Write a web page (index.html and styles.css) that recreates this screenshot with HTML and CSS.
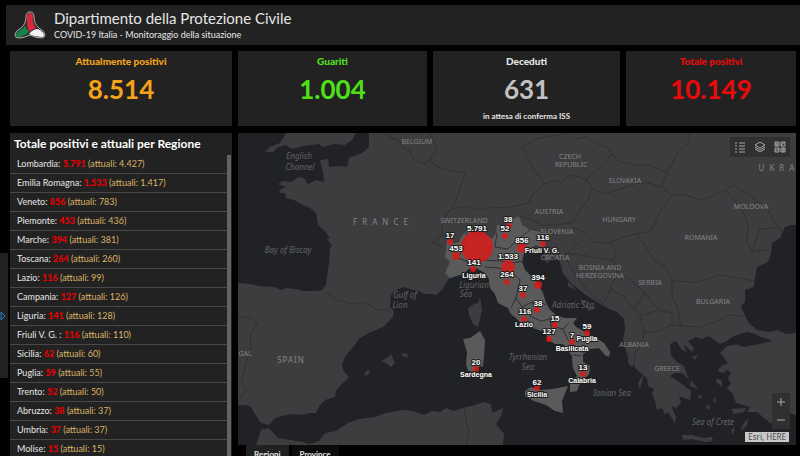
FILE: index.html
```html
<!DOCTYPE html>
<html lang="it">
<head>
    <meta charset="UTF-8">
    <title>Dipartimento della Protezione Civile</title>
    <link rel="stylesheet" href="styles.css">
</head>
<body>
    <header class="header">
        <svg class="logo" viewBox="0 0 32 30">
            <path d="M16 2 Q20 2 20 7 Q20 14 25 18 Q31 21 31 25 Q31 28 27 28 Q22 28 16 25 Q10 28 5 28 Q1 28 1 25 Q1 21 7 18 Q12 14 12 7 Q12 2 16 2Z" class="logo-edge"/>
            <path d="M16 3 Q19 3 19 7 Q18 13 22 18 Q18 19 16 22 Q12 18 13 8 Q13 3 16 3Z" class="logo-red"/>
            <path d="M11 15 Q12 19 15 22 Q11 26 5 27 Q2 27 2 25 Q3 21 8 19 Q10 18 11 15Z" class="logo-green"/>
            <path d="M15 24 Q19 19 24 19 Q30 22 30 25 Q30 27 27 27 Q21 27 15 24Z" class="logo-white"/>
        </svg>
        <div>
            <h1>Dipartimento della Protezione Civile</h1>
            <p>COVID-19 Italia - Monitoraggio della situazione</p>
        </div>
    </header>

    <main class="dashboard">
        <section class="card orange">
            <h2>Attualmente positivi</h2>
            <p class="value">8.514</p>
        </section>
        <section class="card green">
            <h2>Guariti</h2>
            <p class="value">1.004</p>
        </section>
        <section class="card grey">
            <h2>Deceduti</h2>
            <p class="value">631</p>
            <p class="note">in attesa di conferma ISS</p>
        </section>
        <section class="card red">
            <h2>Totale positivi</h2>
            <p class="value">10.149</p>
        </section>

        <section class="regions">
            <h2>Totale positivi e attuali per Regione</h2>
            <ul>
                <li>Lombardia: <b>5.791</b> <span>(attuali: 4.427)</span></li>
                <li>Emilia Romagna: <b>1.533</b> <span>(attuali: 1.417)</span></li>
                <li>Veneto: <b>856</b> <span>(attuali: 783)</span></li>
                <li>Piemonte: <b>453</b> <span>(attuali: 436)</span></li>
                <li>Marche: <b>394</b> <span>(attuali: 381)</span></li>
                <li>Toscana: <b>264</b> <span>(attuali: 260)</span></li>
                <li>Lazio: <b>116</b> <span>(attuali: 99)</span></li>
                <li>Campania: <b>127</b> <span>(attuali: 126)</span></li>
                <li>Liguria: <b>141</b> <span>(attuali: 128)</span></li>
                <li>Friuli V. G. : <b>116</b> <span>(attuali: 110)</span></li>
                <li>Sicilia: <b>62</b> <span>(attuali: 60)</span></li>
                <li>Puglia: <b>59</b> <span>(attuali: 55)</span></li>
                <li>Trento: <b>52</b> <span>(attuali: 50)</span></li>
                <li>Abruzzo: <b>38</b> <span>(attuali: 37)</span></li>
                <li>Umbria: <b>37</b> <span>(attuali: 37)</span></li>
                <li>Molise: <b>15</b> <span>(attuali: 15)</span></li>
            </ul>
        </section>

        <section class="map-column">
            <div class="map">
                <svg class="map-canvas" viewBox="238 133 558 312" preserveAspectRatio="xMidYMid slice">
                    <!-- Land -->
                    <g class="land">
                        <path d="M369 133 V147 L362 153 349 158 347 167 338 166 329 167 328 159 320 160 323 172 324 182 316 180 308 184 304 178 299 177 291 182 283 181 278 184 286 187 280 190 279 193 285 193 286 198 294 200 303 205 310 208 316 213 317 218 318 225 324 230 330 238 327 239 332 246 330 248 329 263 326 285 322 290 316 291 303 291 296 289 286 288 281 290 274 287 259 286 250 284 238 283 V405 L246 405 251 407 255 414 261 423 269 425 274 419 281 416 292 414 303 415 310 413 316 413 320 405 325 400 335 397 336 391 340 386 349 377 343 370 342 365 345 357 353 347 360 338 369 333 383 327 393 317 394 311 390 307 391 295 394 291 403 287 413 290 420 291 424 294 431 294 436 295 443 289 445 284 450 278 463 274 470 268 476 268 485 273 489 279 490 288 495 294 498 303 508 308 511 314 517 319 522 324 530 327 545 332 549 340 555 344 563 344 568 350 572 356 573 368 577 376 570 384 570 392 577 391 580 383 589 374 590 366 583 362 583 354 590 349 599 348 605 355 609 357 610 352 604 343 596 338 587 333 576 327 573 323 577 318 564 318 556 315 550 310 546 303 543 293 538 284 531 276 525 270 522 262 524 253 530 249 536 248 539 252 545 249 543 258 547 263 554 256 560 262 563 274 572 284 583 293 595 301 607 308 617 312 624 319 625 329 623 340 627 354 630 362 638 371 647 378 648 386 654 389 652 394 655 401 657 410 662 408 665 415 668 412 675 423 676 417 671 406 676 408 681 403 679 396 690 400 691 391 682 384 670 376 675 373 682 373 689 380 684 366 677 362 671 355 670 344 676 341 682 350 687 352 683 344 692 352 694 348 688 341 696 337 702 339 709 336 720 344 727 341 732 337 740 334 747 332 755 334 760 337 771 340 756 344 744 347 738 344 727 346 720 353 728 363 720 367 731 372 728 378 731 384 727 388 733 394 736 403 750 407 747 412 757 412 770 423 783 422 787 412 796 415 V333 L786 334 777 330 770 332 757 330 748 322 743 311 741 306 745 302 745 290 754 287 755 278 757 267 768 262 771 254 772 243 780 238 785 227 791 225 796 225 V133 Z"/>
                        <path d="M286 133 280 143 270 147 265 152 273 152 278 147 286 145 292 149 303 146 319 144 323 147 334 144 345 145 352 140 356 133Z"/>
                        <path d="M256 445 261 430 269 428 278 438 291 440 303 442 309 444 319 441 325 433 336 431 348 423 359 419 375 417 386 413 403 410 413 411 424 415 432 411 440 412 446 408 454 411 463 408 475 405 484 402 491 404 492 413 503 408 502 414 496 424 504 434 503 445Z"/>
                        <path d="M480 297 482 310 478 327 473 324 469 315 468 308 474 304 478 303Z"/>
                        <path d="M381 361 388 357 391 354 395 363 391 367 386 363Z M400 354 407 353 408 358 403 356Z M364 373 369 370 370 373 366 376Z"/>
                        <path d="M682 435 691 435 704 438 712 437 713 441 706 442 692 439 683 440Z M742 426 748 418 747 425 741 431Z M731 409 746 408 744 412 734 414Z M691 380 698 389 690 386Z M718 369 726 365 725 373 719 372Z M717 378 722 381 722 387 716 382Z M692 357 698 355 695 360Z M638 383 644 374 640 389Z M698 394 703 397 699 399Z M705 407 709 405 710 410Z M713 400 716 397 715 404Z M731 430 735 427 733 435Z"/>
                        <path d="M628 357 633 364 632 367 628 363Z M574 275 580 287 575 284Z M568 281 577 291 568 286Z M580 299 590 302 582 304Z M585 306 597 308 589 311Z"/>
                    </g>
                    <path class="marmara" d="M729 345 740 338 752 334 759 338 773 341 754 345 742 346 735 344Z"/>

                    <!-- Italy -->
                    <g class="italy">
                        <path d="M447 240 454 243 459 242 462 236 466 232 468 228 472 235 478 238 484 233 492 239 496 233 497 225 505 225 511 220 519 216 522 225 530 230 541 232 540 238 545 249 536 245 530 249 524 253 522 262 525 270 531 276 538 284 543 293 546 303 550 310 556 315 564 318 577 318 573 323 576 327 587 333 596 338 604 343 610 352 609 357 605 355 599 348 590 349 583 354 583 362 590 366 589 374 580 383 577 391 570 392 570 384 577 376 573 368 572 356 568 350 563 344 555 344 549 340 545 332 530 327 522 324 517 319 511 314 508 308 498 303 495 294 490 288 489 279 485 273 476 268 470 268 463 274 450 278 445 273 450 262 445 257 446 249Z"/>
                        <path d="M480 331 485 340 484 356 483 366 477 367 474 372 468 371 466 364 467 352 463 339 470 338Z"/>
                        <path d="M525 391 531 387 540 390 553 389 568 386 562 401 563 413 555 411 546 405 534 401 525 396Z"/>
                    </g>

                    <!-- Borders -->
                    <g class="borders">
                        <path d="M385 133 393 139 398 139 402 147 410 151 414 160 420 162 425 164 428 160 433 164 441 168 451 171 465 173 460 189 454 205 450 210 441 222 443 235"/>
                        <path d="M430 133 437 150 431 158 433 164"/>
                        <path d="M451 209 467 206 479 210 494 207 506 208 517 206 530 203 531 196 545 184 534 170 527 156 522 147 538 138 551 136 570 133"/>
                        <path d="M545 184 555 180 561 183 568 175 579 177 586 179 597 170 607 160 612 154 608 148 595 143 585 137 576 139"/>
                        <path d="M586 179 592 188 588 200 580 210 574 222 558 225 541 225 533 220 519 216"/>
                        <path d="M592 188 604 194 618 190 637 183 648 183 661 187 667 172 649 165 636 165 620 162 612 154"/>
                        <path d="M667 172 680 150 690 141 689 133 M661 187 672 195 685 195 702 200 726 190 733 185 745 192 757 201 768 209 773 220 783 234"/>
                        <path d="M672 195 662 209 651 231 636 234 622 237 609 243 593 242 582 231 573 227"/>
                        <path d="M726 190 742 209 748 224 747 241 752 251 769 250 M752 251 760 229 776 228"/>
                        <path d="M636 234 645 246 654 260 666 267 672 281 697 282 721 275 754 281 M672 281 672 295 678 310 681 326 700 327 716 322 729 315 744 316"/>
                        <path d="M609 243 616 252 614 260 618 273 610 289 605 302 M582 239 568 253 562 257 M564 254 576 254 592 257 614 260 M564 256 575 274 590 293 606 306"/>
                        <path d="M610 289 623 296 634 309 640 316 658 310 672 313 672 325 659 331 644 333 640 317 M644 333 642 346 635 352 634 367 M672 325 682 326 M618 273 632 281 645 293 634 309 M645 293 658 310"/>
                        <path d="M323 290 337 300 353 304 364 302 376 309 390 311"/>
                        <path d="M238 317 250 317 257 324 250 333 251 348 245 367 241 383 247 389 240 398"/>
                        <path d="M464 408 466 421 469 433 466 445"/>
                        <path d="M443 235 432 242 443 247"/>
                        <path d="M467 232 464 246 458 258 469 262 482 260 500 261 513 263 523 261 M497 233 495 247 508 249 518 239 530 230"/>
                        <path d="M485 267 499 268 514 274 520 280 516 298 522 307 530 303 539 301 546 305 M516 298 511 308 M522 307 530 316 541 321 550 319 552 333 M553 315 552 326 563 329 569 323 M563 329 568 340 583 353 M573 355 582 356"/>
                    </g>

                    <!-- Countries and seas -->
                    <g class="country">
                        <text x="417" y="144">BELGIUM</text>
                        <text x="570" y="159">CZECH</text>
                        <text x="571" y="167">REPUBLIC</text>
                        <text x="625" y="183">SLOVAKIA</text>
                        <text x="549" y="214">AUSTRIA</text>
                        <text x="619" y="222">HUNGARY</text>
                        <text x="751" y="209">MOLDOVA</text>
                        <text x="464" y="223">SWITZERLAND</text>
                        <text x="557" y="234">SLOVENIA</text>
                        <text x="701" y="240">ROMANIA</text>
                        <text x="555" y="260">CROATIA</text>
                        <text x="600" y="270">BOSNIA AND</text>
                        <text x="600" y="278">HERZEGOVINA</text>
                        <text x="650" y="285">SERBIA</text>
                        <text x="713" y="304">BULGARIA</text>
                        <text x="634" y="347">ALBANIA</text>
                        <text x="667" y="371">GREECE</text>
                        <text x="245" y="356">GAL</text>
                        <text x="291" y="363" class="wide">SPAIN</text>
                        <text x="383" y="225" class="widest">FRANCE</text>
                        <text x="779" y="171" class="widest">UKRA</text>
                    </g>
                    <g class="sea">
                        <text x="299" y="159">English</text>
                        <text x="300" y="170">Channel</text>
                        <text x="288" y="253">Bay of Biscay</text>
                        <text x="405" y="298">Gulf of</text>
                        <text x="400" y="308">Lion</text>
                        <text x="474" y="288">Ligurian</text>
                        <text x="466" y="297">Sea</text>
                        <text x="573" y="308">Adriatic Sea</text>
                        <text x="528" y="360">Tyrrhenian</text>
                        <text x="528" y="370">Sea</text>
                        <text x="612" y="396">Ionian Sea</text>
                        <text x="713" y="425">Sea of Crete</text>
                    </g>

                    <!-- Cases -->
                    <g class="cases">
                        <circle cx="477" cy="247" r="16"/>
                        <circle cx="450" cy="242" r="3"/>
                        <circle cx="456" cy="256" r="4"/>
                        <circle cx="473" cy="269" r="3"/>
                        <circle cx="509" cy="226" r="3"/>
                        <circle cx="505" cy="236" r="3"/>
                        <circle cx="522" cy="248" r="5"/>
                        <circle cx="543" cy="244" r="3"/>
                        <circle cx="508" cy="267" r="7"/>
                        <circle cx="507" cy="282" r="3"/>
                        <circle cx="538" cy="285" r="4"/>
                        <circle cx="523" cy="295" r="3"/>
                        <circle cx="537" cy="310" r="3"/>
                        <circle cx="524" cy="319" r="3"/>
                        <circle cx="549" cy="339" r="3"/>
                        <circle cx="555" cy="325" r="3"/>
                        <circle cx="587" cy="333" r="3"/>
                        <circle cx="572" cy="342" r="3"/>
                        <circle cx="583" cy="374" r="3"/>
                        <circle cx="537" cy="388" r="3"/>
                        <circle cx="476" cy="369" r="3"/>
                    </g>
                    <g class="count">
                        <text x="477" y="231">5.791</text>
                        <text x="450" y="238">17</text>
                        <text x="456" y="251">453</text>
                        <text x="474" y="265">141</text>
                        <text x="508" y="222">38</text>
                        <text x="505" y="231">52</text>
                        <text x="522" y="243">856</text>
                        <text x="543" y="240">116</text>
                        <text x="508" y="259">1.533</text>
                        <text x="507" y="277">264</text>
                        <text x="538" y="280">394</text>
                        <text x="523" y="291">37</text>
                        <text x="538" y="306">38</text>
                        <text x="525" y="314">116</text>
                        <text x="549" y="334">127</text>
                        <text x="555" y="321">15</text>
                        <text x="587" y="329">59</text>
                        <text x="572" y="338">7</text>
                        <text x="583" y="370">13</text>
                        <text x="537" y="385">62</text>
                        <text x="476" y="365">20</text>
                    </g>
                    <g class="count name">
                        <text x="474" y="278">Liguria</text>
                        <text x="542" y="253">Friuli V. G.</text>
                        <text x="524" y="327">Lazio</text>
                        <text x="587" y="341">Puglia</text>
                        <text x="572" y="351">Basilicata</text>
                        <text x="582" y="383">Calabria</text>
                        <text x="537" y="397">Sicilia</text>
                        <text x="476" y="377">Sardegna</text>
                    </g>
                </svg>

                <div class="map-tools">
                    <button type="button" aria-label="Legenda">
                        <svg viewBox="0 0 12 12"><path d="M1 2h2M5 2h6M1 5h2M5 5h6M1 8h2M5 8h6M1 11h2M5 11h6"/></svg>
                    </button>
                    <button type="button" aria-label="Livelli">
                        <svg viewBox="0 0 12 12"><path d="M6 1L11 4 6 7 1 4ZM1 6L6 9 11 6M1 8L6 11 11 8"/></svg>
                    </button>
                    <button type="button" aria-label="Mappe di base">
                        <svg viewBox="0 0 12 12"><path d="M1 1h4v4H1ZM7 1h4v4H7ZM1 7h4v4H1ZM7 7h4v4H7ZM1 3h3M3 2v3M7 4l4-3M1 10l4-2M8 9h3M9 7v4"/></svg>
                    </button>
                </div>
                <div class="map-zoom">
                    <button type="button" aria-label="Ingrandisci">
                        <svg viewBox="0 0 12 12"><path d="M2 6h8M6 2v8"/></svg>
                    </button>
                    <button type="button" aria-label="Riduci">
                        <svg viewBox="0 0 12 12"><path d="M2 6h8"/></svg>
                    </button>
                </div>
                <span class="attribution">Esri, HERE</span>
            </div>
            <div class="tabs">
                <button type="button" class="active">Regioni</button>
                <button type="button">Province</button>
            </div>
        </section>
    </main>

    <button type="button" class="side-handle" aria-label="Apri pannello">
        <svg viewBox="0 0 6 10"><path d="M1 1L5 5 1 9Z"/></svg>
    </button>
</body>
</html>
```
FILE: styles.css
```css
* {
    box-sizing: border-box;
}

body {
    margin: 0;
    padding: 5px 0 0;
    height: 100vh;
    display: flex;
    flex-direction: column;
    overflow: hidden;
    background-color: #000000;
    color: #e6e6e6;
    font-family: Lato, sans-serif;
}

h1, h2, p, ul {
    margin: 0;
    padding: 0;
}

button {
    border: none;
    padding: 0;
    background: none;
    color: inherit;
    font-family: inherit;
    cursor: pointer;
}

.header {
    margin-left: 6px;
    padding-left: 8px;
    height: 40px;
    flex: none;
    display: flex;
    align-items: center;
    gap: 8px;
    background-color: #222222;
}

.header h1 {
    font-size: 15px;
    line-height: 20px;
    font-weight: 400;
}

.header p {
    font-size: 9px;
    line-height: 14px;
}

/* Logo */
.logo {
    width: 32px;
    height: 30px;
}

.logo-edge {
    fill: #2a2a2a;
    stroke: #b0b0b0;
}

.logo-green {
    fill: #16834a;
}

.logo-white {
    fill: #f4f4f4;
}

.logo-red {
    fill: #d8283c;
}

.dashboard {
    flex: 1;
    min-height: 0;
    margin: 6px 4px 0 10px;
    display: grid;
    grid-template-columns: 222fr 189fr 187fr 170fr;
    grid-template-rows: 75px minmax(0, 1fr);
    gap: 7px 6px;
}

/* Counters */
.card {
    padding-top: 4px;
    background-color: #222222;
    text-align: center;
}

.card h2 {
    font-size: 10px;
    line-height: 12px;
    font-weight: 900;
}

.card .value {
    margin-top: 6px;
    font-size: 26px;
    line-height: 32px;
    font-weight: 700;
}

.card .note {
    margin-top: 6px;
    font-size: 8px;
    line-height: 10px;
    font-weight: 700;
    color: #e6e6e6;
}

.orange {
    color: #f5a31a;
}

.green {
    color: #4fe01a;
}

.grey .value {
    color: #c4c0c4;
}

.red {
    color: #ea0a0a;
}

/* Region list */
.regions {
    display: flex;
    flex-direction: column;
    background-color: #222222;
}

.regions h2 {
    padding-left: 4px;
    font-size: 12px;
    line-height: 22px;
    color: #ffffff;
}

.regions ul {
    flex: 1;
    margin-right: 1px;
    display: flex;
    flex-direction: column;
    list-style: none;
    border-right: 4px solid #626262;
}

.regions li {
    flex: 1;
    padding-left: 7px;
    border-bottom: 1px solid #484848;
    font-size: 9px;
    line-height: 18px;
}

.regions b {
    color: #e80000;
    font-weight: 900;
}

.regions span {
    color: #dcb466;
}

/* Map */
.map-column {
    grid-column: 2 / 5;
    display: flex;
    flex-direction: column;
}

.map {
    position: relative;
    flex: 1;
    min-height: 0;
    background-color: #212226;
}

.map-canvas {
    display: block;
    width: 100%;
    height: 100%;
}

.land {
    fill: #3d3d3f;
}

.italy {
    fill: #5a5a5a;
}

.marmara {
    fill: #212226;
}

.borders {
    fill: none;
    stroke: #303032;
    stroke-width: 1px;
    stroke-linejoin: round;
}

.country {
    fill: #858585;
    font-family: "Noto Sans", sans-serif;
    font-size: 7px;
    text-anchor: middle;
}

.wide {
    font-size: 8px;
    letter-spacing: 1px;
}

.widest {
    font-size: 8px;
    letter-spacing: 5px;
}

.sea {
    fill: #626368;
    font-family: "Noto Sans", sans-serif;
    font-size: 8px;
    font-style: italic;
    text-anchor: middle;
}

.cases {
    fill: #d91a1a;
    fill-opacity: 0.85;
}

.count {
    fill: #ffffff;
    stroke: #1c1c1c;
    stroke-width: 2px;
    stroke-linejoin: round;
    paint-order: stroke;
    font-family: "Liberation Sans", sans-serif;
    font-size: 8px;
    font-weight: 700;
    text-anchor: middle;
}

.name {
    font-size: 7px;
}

.map-tools {
    position: absolute;
    top: 4px;
    right: 6px;
    height: 20px;
    padding: 0 4px;
    display: flex;
    align-items: center;
    gap: 8px;
    background-color: #303030;
}

.map button svg {
    display: block;
    width: 12px;
    height: 12px;
    fill: none;
    stroke: #a8a8a8;
}

.map-zoom {
    position: absolute;
    right: 6px;
    bottom: 16px;
    width: 18px;
    display: flex;
    flex-direction: column;
    background-color: #303030;
}

.map-zoom button {
    height: 18px;
    padding-left: 3px;
}

.attribution {
    position: absolute;
    right: 7px;
    bottom: 3px;
    padding: 0 3px;
    background-color: #c8c8c8;
    color: #4c4c4c;
    font-family: "Noto Sans", sans-serif;
    font-size: 8px;
    line-height: 10px;
}

.tabs {
    height: 11px;
    flex: none;
    display: flex;
    gap: 3px;
    padding-left: 8px;
    overflow: hidden;
}

.tabs button {
    height: 18px;
    padding: 0 8px;
    background-color: #0c0c0c;
    font-size: 8px;
    line-height: 18px;
    font-weight: 700;
}

.tabs .active {
    background-color: #222222;
}

.side-handle {
    position: absolute;
    left: 0;
    top: 253px;
    width: 8px;
    height: 125px;
    background-color: #222222;
}

.side-handle svg {
    display: block;
    width: 6px;
    height: 10px;
    fill: none;
    stroke: #2a7fc4;
}
```
